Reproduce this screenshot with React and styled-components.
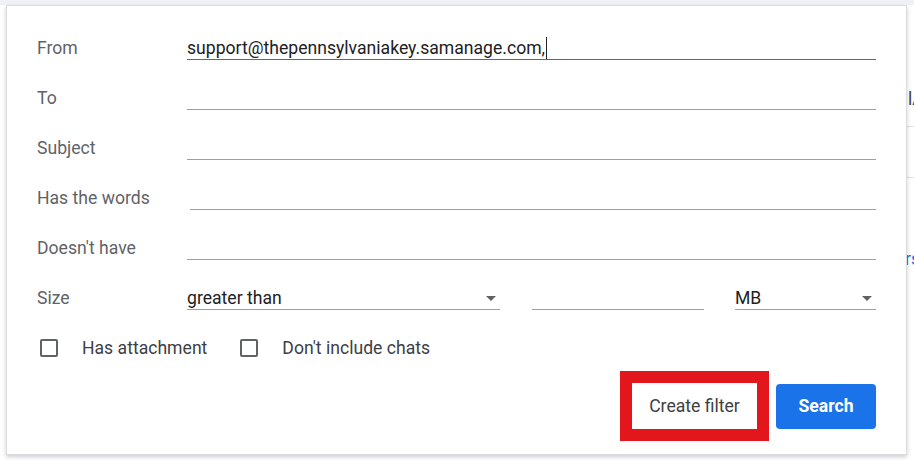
import React from "react";
import styled, { createGlobalStyle } from "styled-components";

const Global = createGlobalStyle`
  html, body {
    margin: 0;
    padding: 0;
    background: #f3f5f8;
    font-family: Roboto, "Liberation Sans", Arial, sans-serif;
  }
`;

const Page = styled.div`
  display: flex;
  width: 914px;
  height: 460px;
  padding: 5px 0 0 6px;
  box-sizing: border-box;
  overflow: hidden;
  background: linear-gradient(#eef1f6 0, #eef1f6 5px, #ffffff 5px);
`;

const Panel = styled.div`
  width: 901px;
  height: 450px;
  box-sizing: border-box;
  background: #fff;
  border: 1px solid #dadce0;
  box-shadow: 0 2px 4px rgba(60, 64, 67, 0.25);
  padding: 4px 30px 0 30px;
  display: flex;
  flex-direction: column;
  position: relative;
  z-index: 1;
`;

const Side = styled.div`
  flex: 1;
  overflow: hidden;
  display: flex;
  flex-direction: column;
  font-size: 17.6px;
  color: #444;
  padding-top: 83px;
`;

const SideText = styled.div`
  line-height: 22px;
  white-space: nowrap;
  color: ${(p) => p.color || "#444"};
  margin-left: ${(p) => p.shift || 0}px;
  margin-top: ${(p) => p.top || 0}px;
`;

const SideLine = styled.div`
  height: 1px;
  background: #e0e0e0;
  margin-top: ${(p) => p.top}px;
`;

const Row = styled.div`
  display: flex;
  align-items: flex-end;
  height: 50px;
  flex-shrink: 0;
`;

const Label = styled.div`
  width: 150px;
  flex-shrink: 0;
  font-size: 17.6px;
  line-height: 22px;
  padding-bottom: 1px;
  color: #5f6368;
`;

const Field = styled.div`
  flex: ${(p) => (p.width ? "none" : 1)};
  width: ${(p) => (p.width ? `${p.width}px` : "auto")};
  margin-left: ${(p) => p.indent || 0}px;
  height: 22px;
  line-height: 22px;
  font-size: 17.6px;
  color: #202124;
  border-bottom: 1px solid ${(p) => (p.active ? "#1a73e8" : "#9aa0a6")};
  display: flex;
  align-items: center;
  white-space: nowrap;
  position: relative;
`;

const Caret = styled.span`
  display: inline-block;
  width: 1px;
  height: 22px;
  background: #202124;
  margin-left: 1px;
`;

const Arrow = styled.span`
  position: absolute;
  right: 4px;
  top: 9px;
  width: 0;
  height: 0;
  border-left: 5px solid transparent;
  border-right: 5px solid transparent;
  border-top: 5px solid #5f6368;
`;

const Gap = styled.div`
  width: ${(p) => p.w}px;
  flex-shrink: 0;
`;

const CheckRow = styled.div`
  display: flex;
  align-items: center;
  height: 36px;
  margin-top: 20px;
  padding-left: 3px;
`;

const Check = styled.label`
  display: flex;
  align-items: center;
  gap: 24px;
  margin-right: 33px;
  font-size: 17.6px;
  color: #3c4043;
`;

const Box = styled.span`
  width: 14px;
  height: 14px;
  border: 2px solid #5f6368;
  border-radius: 2px;
`;

const Actions = styled.div`
  display: flex;
  justify-content: flex-end;
  align-items: center;
  gap: 19px;
  margin-top: 17px;
`;

const Button = styled.button`
  height: ${(p) => (p.primary ? 45 : 46)}px;
  width: ${(p) => (p.primary ? 100 : 125)}px;
  border: none;
  border-radius: ${(p) => (p.marked ? 0 : 4)}px;
  background: ${(p) => (p.primary ? "#1a73e8" : "#fff")};
  color: ${(p) => (p.primary ? "#fff" : "#3c4043")};
  font-family: Roboto, "Liberation Sans", Arial, sans-serif;
  font-size: 17.6px;
  font-weight: ${(p) => (p.primary ? 700 : 400)};
  padding: 0;
  cursor: pointer;
  outline: ${(p) => (p.marked ? "12px solid #e3161c" : "none")};
  outline-offset: 0;
`;

const fields = [
  { label: "From", value: "support@thepennsylvaniakey.samanage.com,", active: true },
  { label: "To" },
  { label: "Subject" },
  { label: "Has the words", indent: 3 },
  { label: "Doesn't have" },
];

export default function App() {
  return (
    <>
      <Global />
      <Page>
        <Panel>
          {fields.map((f) => (
            <Row key={f.label}>
              <Label>{f.label}</Label>
              <Field active={f.active} indent={f.indent}>
                {f.value}
                {f.active && <Caret />}
              </Field>
            </Row>
          ))}
          <Row>
            <Label>Size</Label>
            <Field width={313}>
              greater than
              <Arrow />
            </Field>
            <Gap w={32} />
            <Field width={172} />
            <Gap w={31} />
            <Field>
              MB
              <Arrow />
            </Field>
          </Row>
          <CheckRow>
            <Check>
              <Box />
              Has attachment
            </Check>
            <Check>
              <Box />
              Don't include chats
            </Check>
          </CheckRow>
          <Actions>
            <Button marked>Create filter</Button>
            <Button primary>Search</Button>
          </Actions>
        </Panel>
        <Side>
          <SideText shift={1}>lA</SideText>
          <SideLine top={16} />
          <SideLine top={50} />
          <SideText color="#1a73e8" shift={-2} top={70}>
            rs
          </SideText>
        </Side>
      </Page>
    </>
  );
}
